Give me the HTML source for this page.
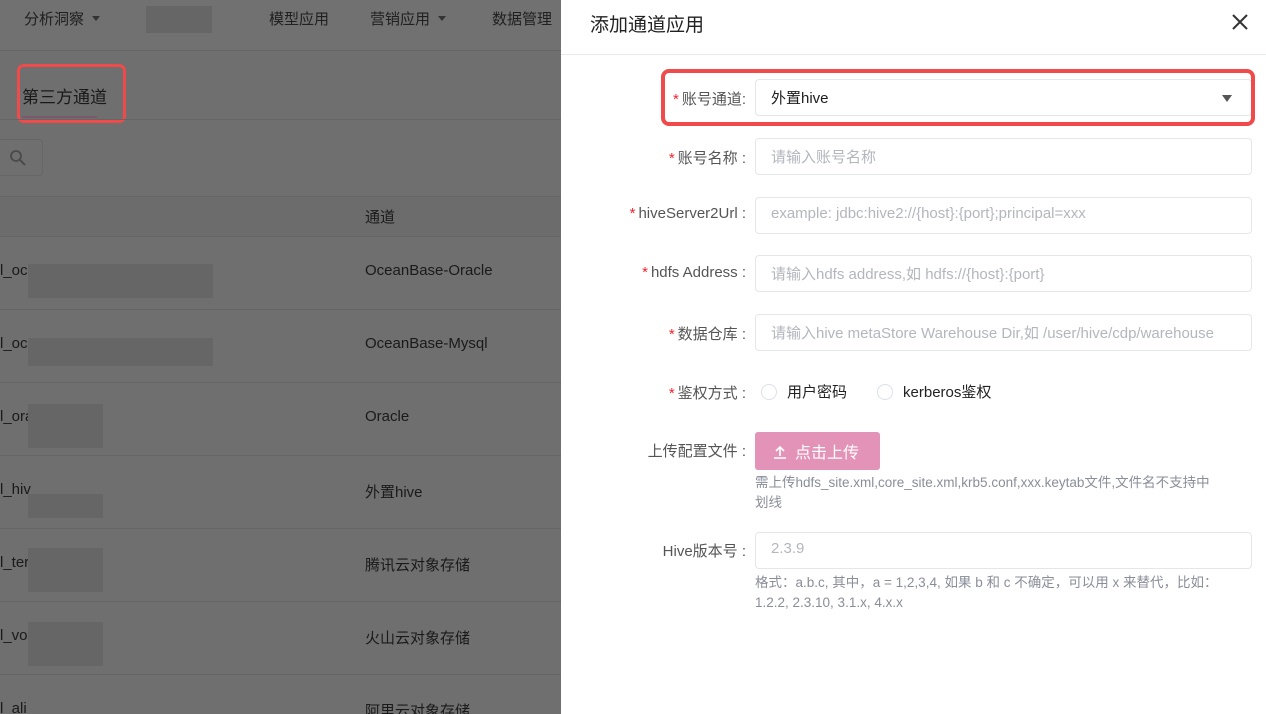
<!DOCTYPE html>
<html style="width:1266px;height:714px;overflow:hidden"><head><meta charset="utf-8"><style>
*{margin:0;padding:0;box-sizing:border-box}
body{width:1266px;height:714px;overflow:hidden;position:relative;background:#6f6f6f;font-family:"Liberation Sans","Noto Sans CJK SC",sans-serif;color:#1c1c1c}
.a{position:absolute}
.nav{left:0;top:0;width:561px;height:50px;background:#717171}
.nav span{position:absolute;top:8px;font-size:15px;color:#202020}
.tri{display:inline-block;width:0;height:0;border-left:4px solid transparent;border-right:4px solid transparent;border-top:5px solid #333;margin-left:8px;vertical-align:3px}
.line{left:0;width:561px;height:1px;background:#656565}
.cell{position:absolute;font-size:15px;color:#1a1a1a}
.blur{position:absolute;background:#666}
.drawer{left:561px;top:0;width:705px;height:714px;background:#fff}
.lbl{position:absolute;right:520px;font-size:15px;color:#555;text-align:right;white-space:nowrap}
.lbl b{color:#f5222d;font-weight:normal;margin-right:3px}
.inp{position:absolute;left:194px;width:497px;height:37px;border:1px solid #e4e6eb;border-radius:4px;font-size:15px;color:#b3b6bd;padding:8px 15px;white-space:nowrap;overflow:hidden}
.hint{position:absolute;left:194px;font-size:13.5px;color:#8a8e99;line-height:20px;width:500px}
.radio{display:inline-block;width:16px;height:16px;border:1px solid #dcdfe6;border-radius:50%;vertical-align:-3px;margin-right:10px}
</style></head><body>
<div class="a nav">
<span style="left:24px">分析洞察<i class="tri"></i></span>
<div class="blur" style="left:146px;top:6px;width:66px;height:27px"></div>
<span style="left:269px">模型应用</span>
<span style="left:370px">营销应用<i class="tri"></i></span>
<span style="left:492px">数据管理</span>
</div>
<div class="a line" style="top:50px"></div>
<div class="cell" style="left:22px;top:83px;font-size:17px">第三方通道</div>
<div class="a" style="left:22px;top:116px;width:75px;height:2px;background:#7a5a6a"></div>
<div class="a" style="left:17px;top:64px;width:109px;height:59px;border:3px solid #f04a4a;border-radius:7px"></div>
<div class="a line" style="top:119px"></div>
<div class="a" style="left:-4px;top:139px;width:47px;height:37px;border:1px solid #666;border-radius:4px"></div>
<svg class="a" style="left:9px;top:149px" width="18" height="18" viewBox="0 0 18 18"><circle cx="7" cy="7" r="5" fill="none" stroke="#4a4a4a" stroke-width="1.8"/><path d="M11 11l5 5" stroke="#4a4a4a" stroke-width="2"/></svg>
<div class="a" style="left:0;top:197px;width:561px;height:39px;background:#6c6c6c"></div>
<div class="a line" style="top:196px"></div>
<div class="cell" style="left:365px;top:206px">通道</div>
<div class="a line" style="top:236px"></div>
<div class="cell" style="left:0;top:262px">l_oc</div><div class="blur" style="left:28px;top:264px;width:185px;height:34px"></div><div class="cell" style="left:365px;top:262px">OceanBase-Oracle</div><div class="a line" style="top:309px"></div>
<div class="cell" style="left:0;top:335px">l_oc</div><div class="blur" style="left:28px;top:338px;width:185px;height:28px"></div><div class="cell" style="left:365px;top:335px">OceanBase-Mysql</div><div class="a line" style="top:382px"></div>
<div class="cell" style="left:0;top:408px">l_ora</div><div class="blur" style="left:28px;top:404px;width:75px;height:44px"></div><div class="cell" style="left:365px;top:408px">Oracle</div><div class="a line" style="top:455px"></div>
<div class="cell" style="left:0;top:481px">l_hiv</div><div class="blur" style="left:28px;top:494px;width:75px;height:24px"></div><div class="cell" style="left:365px;top:481px">外置hive</div><div class="a line" style="top:528px"></div>
<div class="cell" style="left:0;top:554px">l_ter</div><div class="blur" style="left:28px;top:548px;width:75px;height:44px"></div><div class="cell" style="left:365px;top:554px">腾讯云对象存储</div><div class="a line" style="top:601px"></div>
<div class="cell" style="left:0;top:627px">l_vo</div><div class="blur" style="left:28px;top:622px;width:75px;height:44px"></div><div class="cell" style="left:365px;top:627px">火山云对象存储</div><div class="a line" style="top:674px"></div>
<div class="cell" style="left:0;top:700px">l_ali</div><div class="cell" style="left:365px;top:700px">阿里云对象存储</div>

<div class="a drawer">
<div class="a" style="left:29px;top:10px;font-size:19px;color:#222">添加通道应用</div>
<svg class="a" style="left:670px;top:13px" width="18" height="18" viewBox="0 0 18 18"><path d="M2 2l14 14M16 2L2 16" stroke="#333" stroke-width="2"/></svg>
<div class="a" style="left:0;top:54px;width:705px;height:1px;background:#e8e9ed"></div>

<div class="lbl" style="top:88px"><b>*</b>账号通道:</div>
<div class="inp" style="top:79px;color:#1c1c1c;padding-top:7px">外置hive</div>
<div class="a" style="left:661px;top:95px;border-left:5px solid transparent;border-right:5px solid transparent;border-top:7px solid #555"></div>
<div class="a" style="left:100px;top:69px;width:594px;height:57px;border:4px solid #f04a4a;border-radius:8px"></div>

<div class="lbl" style="top:147px"><b>*</b>账号名称 :</div>
<div class="inp" style="top:138px;padding-top:7px">请输入账号名称</div>
<div class="lbl" style="top:205px"><b>*</b>hiveServer2Url :</div>
<div class="inp" style="top:197px;padding-top:7px">example: jdbc:hive2://{host}:{port};principal=xxx</div>
<div class="lbl" style="top:264px"><b>*</b>hdfs Address :</div>
<div class="inp" style="top:255px;padding-top:7px">请输入hdfs address,如 hdfs://{host}:{port}</div>
<div class="lbl" style="top:323px"><b>*</b>数据仓库 :</div>
<div class="inp" style="top:314px;padding-top:7px">请输入hive metaStore Warehouse Dir,如 /user/hive/cdp/warehouse</div>
<div class="lbl" style="top:382px"><b>*</b>鉴权方式 :</div>
<div class="a" style="left:200px;top:381px;font-size:15px;color:#222"><i class="radio"></i>用户密码<i class="radio" style="margin-left:30px"></i>kerberos鉴权</div>
<div class="lbl" style="top:440px">上传配置文件 :</div>
<div class="a" style="left:194px;top:432px;width:125px;height:38px;background:#e393b8;border-radius:3px;color:#fff;font-size:16px;padding:7px 0 0 18px">
<svg width="14" height="14" viewBox="0 0 14 14" style="vertical-align:-1px;margin-right:8px"><path d="M7 11V2M3 6l4-4 4 4M1 13h12" fill="none" stroke="#fff" stroke-width="1.6"/></svg>点击上传</div>
<div class="hint" style="top:473px">需上传hdfs_site.xml,core_site.xml,krb5.conf,xxx.keytab文件,文件名不支持中<br>划线</div>
<div class="lbl" style="top:540px">Hive版本号 :</div>
<div class="inp" style="top:532px;padding-top:7px">2.3.9</div>
<div class="hint" style="top:573px">格式：a.b.c, 其中，a = 1,2,3,4, 如果 b 和 c 不确定，可以用 x 来替代，比如：<br>1.2.2, 2.3.10, 3.1.x, 4.x.x</div>
</div>
</body></html>
